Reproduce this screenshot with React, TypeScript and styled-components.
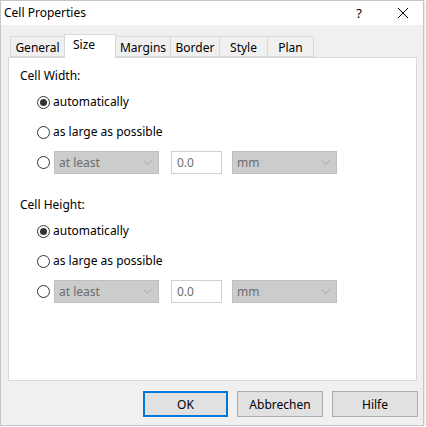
import { createGlobalStyle, styled } from "styled-components";

const GlobalStyle = createGlobalStyle`
    html, body {
        margin: 0;
        padding: 0;
        background: #ffffff;
    }
    body {
        font-family: "Noto Sans", "Liberation Sans", sans-serif;
        font-size: 12px;
        color: #000;
    }
`

const Window = styled.div`
    width: 422px;
    height: 424px;
    border: 1px solid #c6c6c6;
    background: #f0f0f0;
    display: flex;
    flex-direction: column;
    box-shadow: 1px 1px 2px rgba(0, 0, 0, 0.12);
`

const TitleBar = styled.div`
    height: 24px;
    background: #ffffff;
    display: flex;
    align-items: center;
    padding-left: 3px;
`

const Title = styled.span`
    flex: 1;
    line-height: 16px;
`

const TitleButton = styled.div<{ width: number }>`
    width: ${props => props.width}px;
    height: 24px;
    display: flex;
    align-items: center;
    justify-content: center;
    font-size: 13px;
`

const Body = styled.div`
    flex: 1;
    display: flex;
    flex-direction: column;
    padding: 9px 6px 0 7px;
`

const TabStrip = styled.div`
    display: flex;
    align-items: flex-end;
    height: 23px;
    padding-left: 2px;
    position: relative;
    z-index: 1;
`

const Tab = styled.div<{ active?: boolean; w: number }>`
    width: ${props => props.w}px;
    box-sizing: border-box;
    height: ${props => props.active ? 24 : 21}px;
    margin-bottom: ${props => props.active ? -1 : 0}px;
    margin-left: -1px;
    border: 1px solid #d9d9d9;
    border-bottom: ${props => props.active ? "none" : "1px solid #d9d9d9"};
    background: ${props => props.active ? "#ffffff" : "#f0f0f0"};
    text-align: ${props => props.active ? "left" : "center"};
    padding-left: ${props => props.active ? 8 : 0}px;
    padding-top: ${props => props.active ? 2 : 3}px;
    line-height: 16px;
    &:first-child {
        margin-left: 0;
    }
`

const Panel = styled.div`
    height: 324px;
    box-sizing: border-box;
    background: #ffffff;
    border: 1px solid #d9d9d9;
    padding: 10px 11px 0 11px;
    display: flex;
    flex-direction: column;
`

const Section = styled.div`
    display: flex;
    flex-direction: column;
    margin-bottom: 23px;
`

const SectionTitle = styled.div`
    line-height: 16px;
    margin-bottom: 6px;
`

const Options = styled.div`
    display: flex;
    flex-direction: column;
    gap: 6px;
    padding-left: 17px;
`

const OptionRow = styled.label`
    height: 24px;
    display: flex;
    align-items: center;
    gap: 3px;
`

const Radio = styled.span<{ checked?: boolean }>`
    width: 13px;
    height: 13px;
    box-sizing: border-box;
    border: 1px solid #333333;
    border-radius: 50%;
    display: flex;
    align-items: center;
    justify-content: center;
    flex-shrink: 0;

    &::after {
        content: "";
        width: 7px;
        height: 7px;
        border-radius: 50%;
        background: ${props => props.checked ? "#333333" : "transparent"};
    }
`

const OptionText = styled.span`
    line-height: 16px;
    margin-top: -1px;
`

const Controls = styled.div`
    display: flex;
    align-items: center;
    margin-left: 1px;
`

const DropDown = styled.div<{ gap?: number }>`
    width: 105px;
    height: 23px;
    box-sizing: border-box;
    margin-right: ${props => props.gap || 0}px;
    background: #cccccc;
    border: 1px solid #bfbfbf;
    color: #6d6d6d;
    display: flex;
    align-items: center;
    justify-content: space-between;
    padding: 0 6px 0 4px;
`

const NumberBox = styled.div`
    width: 51px;
    height: 23px;
    box-sizing: border-box;
    margin-right: 10px;
    background: #ffffff;
    border: 1px solid #d0d0d0;
    color: #6d6d6d;
    display: flex;
    align-items: center;
    padding-left: 5px;
`

const ButtonRow = styled.div`
    display: flex;
    justify-content: flex-end;
    gap: 9px;
    padding-top: 10px;
    margin-right: -1px;
`

const Button = styled.button<{ primary?: boolean }>`
    width: ${props => props.primary ? 85 : 86}px;
    height: 26px;
    box-sizing: border-box;
    background: #e1e1e1;
    border: ${props => props.primary ? "2px solid #0078d7" : "1px solid #adadad"};
    font-family: inherit;
    font-size: 12px;
    color: #000;
    padding: 0;
`

function Chevron() {
    return (
        <svg width="9" height="5" viewBox="0 0 9 5">
            <path d="M0.5 0.5 L4.5 4.5 L8.5 0.5" fill="none" stroke="#a6a6a6" strokeWidth="1" />
        </svg>
    )
}

function CloseIcon() {
    return (
        <svg width="10" height="10" viewBox="0 0 10 10">
            <path d="M0 0 L10 10 M10 0 L0 10" stroke="#000" strokeWidth="1" />
        </svg>
    )
}

function SizeGroup({ title }: { title: string }) {
    return (
        <Section>
            <SectionTitle>{title}</SectionTitle>
            <Options>
                <OptionRow>
                    <Radio checked />
                    <OptionText>automatically</OptionText>
                </OptionRow>
                <OptionRow>
                    <Radio />
                    <OptionText>as large as possible</OptionText>
                </OptionRow>
                <OptionRow>
                    <Radio />
                    <Controls>
                        <DropDown gap={12}>
                            <span>at least</span>
                            <Chevron />
                        </DropDown>
                        <NumberBox>0.0</NumberBox>
                        <DropDown>
                            <span>mm</span>
                            <Chevron />
                        </DropDown>
                    </Controls>
                </OptionRow>
            </Options>
        </Section>
    )
}

const tabs = [
    { label: "General", w: 55 },
    { label: "Size", w: 52 },
    { label: "Margins", w: 56 },
    { label: "Border", w: 50 },
    { label: "Style", w: 49 },
    { label: "Plan", w: 47 },
]

export default function App() {
    return (
        <>
            <GlobalStyle />
            <Window>
                <TitleBar>
                    <Title>Cell Properties</Title>
                    <TitleButton width={48}>?</TitleButton>
                    <TitleButton width={40}><CloseIcon /></TitleButton>
                </TitleBar>
                <Body>
                    <TabStrip>
                        {tabs.map(t => (
                            <Tab key={t.label} w={t.w} active={t.label === "Size"}>{t.label}</Tab>
                        ))}
                    </TabStrip>
                    <Panel>
                        <SizeGroup title="Cell Width:" />
                        <SizeGroup title="Cell Height:" />
                    </Panel>
                    <ButtonRow>
                        <Button primary>OK</Button>
                        <Button>Abbrechen</Button>
                        <Button>Hilfe</Button>
                    </ButtonRow>
                </Body>
            </Window>
        </>
    )
}
